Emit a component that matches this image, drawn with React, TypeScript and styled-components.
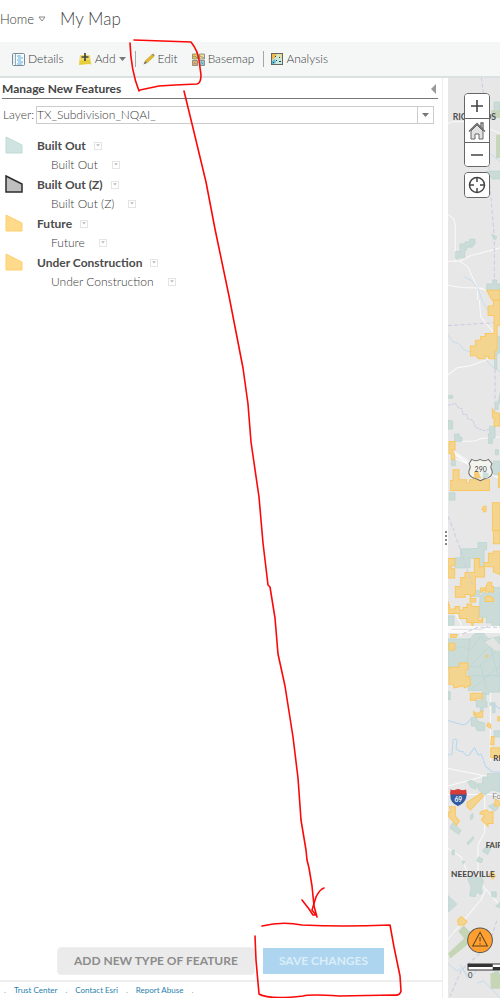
import React from "react";
import styled, { createGlobalStyle } from "styled-components";

const GlobalStyle = createGlobalStyle`
  * { box-sizing: border-box; }
  body { margin: 0; background: #fff; }
  body, button, select { font-family: Lato, "Open Sans", sans-serif; font-weight: 300; color: #3a3a3a; }
`;

const Page = styled.div`
  position: relative;
  display: flex;
  flex-direction: column;
  min-height: 100vh;
  overflow: hidden;
`;

const Header = styled.header`
  display: flex;
  align-items: center;
  gap: 14px;
  height: 42px;
  padding-bottom: 5px;
`;

const HomeButton = styled.button`
  display: flex;
  align-items: center;
  gap: 4px;
  padding: 0;
  border: 0;
  background: none;
  font-size: 13px;
  line-height: 16px;
`;

const MapTitle = styled.h1`
  margin: 0;
  font-size: 17px;
  line-height: 22px;
  font-weight: 300;
  color: #444;
`;

const Toolbar = styled.nav`
  display: flex;
  align-items: center;
  height: 36px;
  padding: 0 12px;
  background: #f5f7f7;
  border-bottom: 2px solid #dbe1e1;
`;

const Tool = styled.button<{ $after: number }>`
  display: flex;
  align-items: center;
  gap: 3px;
  padding: 0;
  margin-right: ${(p) => p.$after}px;
  border: 0;
  background: none;
  font-size: 12px;
  line-height: 16px;
  svg { flex: none; }
`;

const Divider = styled.span`
  width: 1px;
  height: 16px;
  margin-right: 7px;
  background: #a5a8a8;
`;

const Workspace = styled.div`
  flex: 1;
  display: grid;
  grid-template-columns: minmax(0, 1fr) 6px 52px;
`;

const Panel = styled.main`
  display: flex;
  flex-direction: column;
`;

const PanelHead = styled.div`
  display: flex;
  align-items: center;
  justify-content: space-between;
  height: 21px;
  padding-top: 2px;
  margin: 0 4px 0 2px;
  border-bottom: 1px solid #777;
`;

const PanelTitle = styled.h2`
  margin: 0;
  font-size: 12px;
  line-height: 16px;
  font-weight: 700;
  color: #444;
`;

const IconButton = styled.button`
  display: flex;
  padding: 0;
  border: 0;
  background: none;
`;

const LayerRow = styled.div`
  display: flex;
  align-items: center;
  gap: 2px;
  margin: 7px 8px 11px 3px;
  font-size: 12px;
  line-height: 16px;
`;

const SelectBox = styled.div`
  position: relative;
  flex: 1;
  display: flex;
`;

const LayerSelect = styled.select`
  appearance: none;
  width: 100%;
  height: 18px;
  padding: 0 20px 0 0;
  border: 1px solid #ccc;
  border-radius: 0;
  background: #fff;
  font-size: 12px;
  line-height: 16px;
`;

const SelectArrow = styled.span`
  position: absolute;
  inset: 1px 1px 1px auto;
  width: 16px;
  display: flex;
  align-items: center;
  justify-content: center;
  border-left: 1px solid #ccc;
  pointer-events: none;
`;

const FeatureList = styled.ul`
  margin: 0;
  padding: 0 5px;
  list-style: none;
`;

const Feature = styled.li`
  display: grid;
  grid-template-columns: 18px 1fr;
  column-gap: 14px;
  height: 39px;
  padding-top: 1px;
  svg { display: block; }
`;

const FeatureLine = styled.div<{ $sub?: boolean }>`
  display: flex;
  align-items: center;
  gap: ${(p) => (p.$sub ? 14 : 8)}px;
  height: 19px;
  padding-left: ${(p) => (p.$sub ? 14 : 0)}px;
  font-size: 12px;
  line-height: 16px;
  font-weight: ${(p) => (p.$sub ? 300 : 700)};
  color: ${(p) => (p.$sub ? "#3a3a3a" : "#4c4c4c")};
`;

const MenuButton = styled.button`
  display: flex;
  align-items: center;
  justify-content: center;
  width: 8px;
  height: 8px;
  padding: 0;
  border: 1px solid #e4e4e4;
  background: #fff;
`;

const Actions = styled.div`
  display: flex;
  justify-content: center;
  gap: 7px;
  margin-top: auto;
  padding-bottom: 5px;
`;

const ActionButton = styled.button<{ $primary?: boolean }>`
  height: 28px;
  padding: 0 16px;
  border: 1px solid ${(p) => (p.$primary ? "#fff" : "#efefef")};
  border-radius: ${(p) => (p.$primary ? 0 : 4)}px;
  background: ${(p) => (p.$primary ? "#aed5ef" : "#ebebeb")};
  color: ${(p) => (p.$primary ? "#daedf8" : "#8c8c8c")};
  font-size: 12px;
  line-height: 16px;
  font-weight: 700;
  white-space: nowrap;
`;

const Footer = styled.footer`
  display: flex;
  align-items: center;
  gap: 8px;
  height: 18px;
  padding-left: 4px;
  border-top: 2px solid #efefef;
  font-size: 8px;
  line-height: 12px;
  font-weight: 400;
  color: #999;
`;

const FooterLink = styled.a`
  color: #287fae;
  text-decoration: none;
`;

const Splitter = styled.div`
  display: flex;
  flex-direction: column;
  align-items: center;
  justify-content: center;
  gap: 2px;
  border-left: 1px solid #eee;
  background: #fff;
`;

const Grip = styled.i`
  width: 2px;
  height: 2px;
  background: #858585;
`;

const MapArea = styled.section`
  position: relative;
  overflow: hidden;
  background: #e7e7e7;
`;

const MapDrawing = styled.svg`
  position: absolute;
  inset: 0;
  width: 100%;
  height: 100%;
`;

const MapControls = styled.div`
  position: absolute;
  top: 15px;
  left: 16px;
  display: flex;
  flex-direction: column;
  gap: 5px;
`;

const ControlGroup = styled.div`
  display: flex;
  flex-direction: column;
  width: 26px;
  border: 1px solid #666;
  border-radius: 4px;
  background: #fff;
  overflow: hidden;
`;

const MapButton = styled.button`
  display: flex;
  align-items: center;
  justify-content: center;
  height: 24px;
  padding: 0;
  border: 0;
  background: #fff;
  & + & { border-top: 1px solid #666; }
`;

const Annotation = styled.svg`
  position: absolute;
  top: 0;
  left: 0;
  width: 500px;
  height: 998px;
  pointer-events: none;
`;

const Down = ({ w = 7, color = "#777" }: { w?: number; color?: string }) => (
  <svg width={w} height={w / 2 + 1} viewBox="0 0 8 5" aria-hidden="true">
    <path d="M0 0h8L4 4.5z" fill={color} />
  </svg>
);

const DetailsIcon = () => (
  <svg width="13" height="13" viewBox="0 0 13 13" aria-hidden="true">
    <rect x=".5" y=".5" width="12" height="12" rx="1" fill="#f5fafc" stroke="#7b8b94" />
    <path d="M3.5 1v11" stroke="#9aa8af" />
    <path d="M5 3h4M6 5h5M5 7h4M6 9h5M5 11h5" stroke="#5ab1df" />
    <path d="M1.5 3h1M1.5 6h1M1.5 9h1" stroke="#9ac8e0" />
  </svg>
);

const AddIcon = () => (
  <svg width="13" height="13" viewBox="0 0 13 13" aria-hidden="true">
    <path d="M1 2.5h10l.5 6 1 3-3-.6L0 12z" fill="#e7cd38" />
    <path d="M1 2.5h10l.3 4L1 8z" fill="#f0dc60" />
    <path d="M6 0v8M2.5 4h7" stroke="#444" strokeWidth="1.7" />
  </svg>
);

const PencilIcon = () => (
  <svg width="12" height="12" viewBox="0 0 12 12" aria-hidden="true">
    <path d="M2 8L9 1.5l2 2L4 10z" fill="#e0b92f" stroke="#c49a26" strokeWidth=".5" />
    <path d="M9 1.5l1-.9 1.7 1.7-.9.9z" fill="#8b8068" />
    <path d="M2 8l2 2-3.5 1.5z" fill="#756f5f" />
  </svg>
);

const BasemapIcon = () => (
  <svg width="13" height="13" viewBox="0 0 13 13" aria-hidden="true">
    <g stroke="#817f70" strokeWidth=".8">
      <path d="M.5 1h5v5h-5z" fill="#e8ca52" />
      <path d="M7.5 1h5v5h-5z" fill="#eddf9a" />
      <path d="M.5 7.5h5v5h-5z" fill="#dfac75" />
      <path d="M7.5 7.5h5v5h-5z" fill="#87c9df" />
    </g>
    <path d="M1 4l2-1 2 2M8 3l4 2M2 10l2 1M9 9l2 2" stroke="#777" strokeWidth=".7" fill="none" />
  </svg>
);

const AnalysisIcon = () => (
  <svg width="12" height="12" viewBox="0 0 12 12" aria-hidden="true">
    <rect x=".5" y=".5" width="11" height="11" fill="#c9e8df" stroke="#65685f" />
    <path d="M1 1h5L4 5 1 7z" fill="#efb94c" />
    <path d="M7 1h4v4L9 6z" fill="#e4df9b" />
    <path d="M1 8l3-2 1 3-2 2H1z" fill="#61b9d8" />
    <path d="M4 3h1v1H4zM8 4h1v1H8zM5 7h1v1H5zM8 8h2v1H8zM2 9h1v1H2z" fill="#344" />
  </svg>
);

const swatches = [
  { name: "Built Out", fill: "#cfe4e1", stroke: "#bddad6", weight: 1 },
  { name: "Built Out (Z)", fill: "#bfbfbf", stroke: "#2c2c2c", weight: 1.5 },
  { name: "Future", fill: "#ffda8b", stroke: "#ffd06d", weight: 1 },
  { name: "Under Construction", fill: "#ffda8b", stroke: "#ffd06d", weight: 1 },
];

const built = { fill: "#cadbd8", stroke: "#b7d4ce", strokeWidth: 2 };
const future = { fill: "#f4d58f", stroke: "#fac75f", strokeWidth: 3 };
const road = { fill: "none", stroke: "#fafafa", strokeWidth: 3 };
const water = { fill: "none", stroke: "#b5d7ef", strokeWidth: 2 };
const border = { fill: "none", stroke: "#cec9e3", strokeWidth: 3, strokeDasharray: "12 7" };

const MapPicture = () => (
  <MapDrawing viewBox="54 24 156 2757" preserveAspectRatio="xMinYMin slice" aria-label="Map of subdivisions">
    <g>
      <path d="M192 96h18v26h-18z" {...built} />
      <path d="M184 120h26v24h-26zM198 194h12v70h-12z" fill="#c7d6ba" />
      <path d="M54 160l14-5h40M175 175l35 15M54 432l18 16 4 20v105M54 573h36l30-16 90-24M90 573l24 18 28 62 68 18M54 645l40 7 66 2M143 652v38" {...road} />
      <path d="M180 250l18 14 12 10M100 618l26 14 18 24 12 34" {...water} />
      <path d="M154 22l14 110 12 220 13 150v188" {...border} />
      <path d="M170 303h40v24h-24v-7h-16zM185 492l6 3 9 5-2 7h-7zM76 544h14v-23h15v-6h14v-8h16v13l-8 11h-17v9h-6v23H84v3h-8zM170 641h18v-12h12v12h10v20h-40z" {...built} />
      <path d="M170 660h40v30h-24z" {...future} />
    </g>
    <g transform="translate(0 690)">
      <path d="M148 0l4 50 40 48M54 224l28-22 40-6 60-22M54 424l80-2 22-8 54-4M75 455l45 30M78 475l45 20 87 40" {...road} />
      <path d="M72 458l48 36 90 36" {...road} strokeWidth="7" />
      <path d="M155 0l18 30M54 104l15 20 18 6 14 18 24 8 20 12 18 4 18 22 29 20" {...water} />
      <path d="M54 76l140-9M195 150v180M54 648l18 42" {...border} />
      <path d="M54 314h9l13-5 12 15 8 1 2 16 12 2 3 12 16 5 7 21 24 9 24-3" {...border} strokeDasharray="8 3" />
      <path d="M192 108h18v50l-10 3v46h-6zM196 310l10-12 4-18v28l-6 7v12h-9zM56 285h12v9H56zM54 360l14 2v24H54zM74 401h14v9h8v13H74zM178 378h17v35h-8v16h-12v-29h5zM64 480h12v16H64zM58 577h17v22H58zM196 448h9v15h-9zM190 482h20v42h-18l-5-11z" {...built} />
      <path d="M190 0h20v75h-9v75h-7v25h-18v-7h-12v7h-18l-9-9h-16v-29h15v-17h16v-11h13v-9h27V46h-18V17h16zM187 326l8 10 14 4v37h-17v-25h-5zM57 423h18v26H65l9 13v15H64v-18h-7zM69 508h18v30h22v10h10v-10h59v32H62v-30h7zM130 505l17-6 10 15v19h-28zM160 617h8v17h-8v-7h-4zM187 607h23v83h-23zM205 518h5v44h-5z" {...future} />
      <path d="M125 477q13 8 25 0 13 8 25 0l11 13q-7 10 0 20 3 14-10 21-13 3-25 10-12-7-24-10-13-7-10-21 7-10 0-20z" fill="#f4f4ef" stroke="#6b6b6b" strokeWidth="3" />
      <path d="M132 515h14l8 20-22-2z" fill="#f5cd78" />
      <path d="M160 512l17 8-5 14-15-3z" fill="#c9dfdc" />
      <text x="152" y="516" textAnchor="middle" fontSize="21" fontWeight="400" fill="#454545">290</text>
    </g>
    <g transform="translate(0 1380)">
      <path d="M126 54h18v-18h26v22h-8v50h-28V84h-14v28H75V82h17V55h28z" {...built} />
      <path d="M54 230l15 5 24 45v38M123 318v185M54 305h156M181 480v210" {...road} />
      <path d="M150 196l10-12 12 7 12-20h26v120h-24v-14h-17v-17h-22zM54 256h18v28H54zM128 180h20v18h-20zM138 114h26v24h-26z" {...built} />
      <path d="M190 0h20v40h-20zM190 62h20v70l-20-8v-15h-28V96h13V68h15zM54 84h20v22H63v9h11v27H54zM133 84h15v25h15v30h-27v51l-15 10v-8h-16v8H76v-32h16v-27h13v-15h28zM174 155h11v13h5v16h-23v-8l-16 10v-14h15zM165 199l10-4 16 10v8h-25zM120 204h17v10h-17zM54 212l7 23h14v-7h14v11h10v-8h12v-11h14v8h21v42h7l5-10v16h-29v15l-6-15h-13v-12H88v-15H54zM62 312h20l-4 9H62z" {...future} />
      <path d="M54 286h156v21H54z" fill="#fafafa" />
      <path d="M64 296h90l20-9" fill="none" stroke="#dddddd" strokeWidth="3" />
      <path d="M54 325h65l15-16h28l12 15 36-6v166l-34 1v7l-16-3-5-10-40 2-2-65H54z" {...built} />
      <path d="M59 362l35-15 26 12 32-40 25 30-50 50M89 402l55 8 55-48M123 435h87M125 474l85-68M150 400l20 74M180 340l22 90M120 324l-8 72" stroke="#bad5cf" strokeWidth="2" fill="none" />
      <path d="M165 336l24-16 21 25v15h-14z" fill="#e4e5e2" />
      <path d="M139 510h16v-21h12v24h4v17h-12v15h-8v-16h-12zM180 516h15v30h-8v-22h-7zM123 560l15-2 6 14 20 5v23h-23l-5-14h-12zM54 483h7v24h-7zM192 600h18v19h-18z" {...built} />
      <path d="M57 338h17v20H57zM57 410h31v-13h26v19h-6v22h11l3 25-20 9v-7l-30 7-3-11H57zM121 488h35v16h-18v5h-17zM131 542l8 7 19-8v19h-21v-7h-6zM174 577l8 4v12l-12-8zM184 617h8v25h-10zM182 651h28v29h-28zM203 558h7v12h-7zM168 374h3v5h-3z" {...future} />
      <path d="M54 569l42 13 13-2 12-15M190 520l20 15M54 673l12-2 3-42q5-9 12 0l-3 23q7 12 22 11 8 15 17 10l16-22 12 22 8-3 7 18" {...water} strokeWidth="3" />
      <path d="M73 8l18 48 22 67 18 45M98 310l45-20h67" {...border} />
      <text x="190" y="692" fontSize="24" fontWeight="700" fill="#444">RI</text>
    </g>
    <g transform="translate(0 2070)">
      <path d="M54 23l113 23h43M54 76l105-29M54 101h138l18 8M164 102v112l-20 38v98l-25 22M54 263l39 25 28 68M144 358l66 76M54 535l100-120 14-32" {...road} />
      <path d="M160 0l7 18 20 15 23 1" {...water} strokeWidth="3" />
      <path d="M140 69h18V49h14V38h38v56l-24-7-22 17-17-15zM112 62l12-4 14 8v19l-14-4zM64 191l6-5 23 23-7 12-26-19zM121 164l8-6v14l-8 4zM175 136l18-8 12 12-10 12zM111 246l18-19 3 6-18 19zM66 268h7v14h-7zM157 271l15-18 10 9-9 19zM146 288l13 8-5 10-14-5zM96 300l9 2-6 8zM113 354l12-8 18 5 13-2 4 15-7 18 4 15-8 4-9-10-4 16-17-2 4-26zM184 393h15v15h-13zM54 404l27 26-27 24zM197 436l13-13v18z" {...built} />
      <path d="M111 125l42-28 7 9-39 42-10-11zM154 152l16-5 7 8 12-3v36h-15v9l-20-20 10-14-15-4zM58 138h18v28l12 14-8 14-24-27v-14h6zM196 115l14 8v12h-17zM83 477l11-10 17 15-9 10h-17zM177 341l10-9 9 13-8 9z" {...future} />
      <path d="M85 511l16-17 22 22v42l-10-8-52 43-7-15 48-45zM181 638l24-9 5 14v40h-28z" fill="#c6d5b6" />
      <path d="M54 608l26 22 18-7 24 30 18-26 34-8 36 20M90 610l24 42M140 668l20-9 50 51" {...water} />
      <path d="M200 480l-25 78-32 25-48 43-35 80" {...border} />
      <path d="M62 86q9 5 22-1 13 6 24 1l3 17q-2 24-27 34-26-11-24-34z" fill="#315b9f" stroke="#eee" strokeWidth="2" />
      <path d="M62 86q9 5 22-1 13 6 24 1l2 15H60z" fill="#d83c36" />
      <text x="85" y="125" textAnchor="middle" fontSize="20" fontWeight="700" fill="#fff">69</text>
      <text x="187" y="114" fontSize="24" fontWeight="400" fill="#8e8e91">Fo</text>
      <text x="167" y="263" fontSize="23" fontWeight="700" fill="#444">FAIR</text>
      <text x="63" y="348" fontSize="25" fontWeight="700" fill="#444">NEEDVILLE</text>
      <circle cx="150" cy="538" r="37" fill="#ff9f31" stroke="#5b554d" strokeWidth="3" />
      <path d="M150 514l22 41h-44zM150 528v14M150 547v4" fill="none" stroke="#594120" strokeWidth="3" />
      <path d="M114 609h98v18h-98z" fill="#fff" stroke="#333" strokeWidth="3" />
      <path d="M114 609h74v9h-74zM188 618h24v9h-24z" fill="#333" />
      <text x="114" y="651" fontSize="23" fontWeight="400" fill="#333">0</text>
    </g>
    <text x="68" y="151" fontSize="26" fontWeight="700" fill="#505050">RICHARDS</text>
  </MapDrawing>
);

export default function App() {
  return (
    <>
      <GlobalStyle />
      <Page>
        <Header>
          <HomeButton>
            Home
            <svg width="8" height="6" viewBox="0 0 8 6" aria-hidden="true">
              <path d="M1 1h6L4 5z" fill="#fff" stroke="#888" />
            </svg>
          </HomeButton>
          <MapTitle>My Map</MapTitle>
        </Header>
        <Toolbar>
          <Tool $after={15}><DetailsIcon />Details</Tool>
          <Tool $after={9}><AddIcon />Add <Down /></Tool>
          <Divider />
          <Tool $after={14}><PencilIcon />Edit</Tool>
          <Tool $after={9}><BasemapIcon />Basemap</Tool>
          <Divider />
          <Tool $after={0}><AnalysisIcon />Analysis</Tool>
        </Toolbar>
        <Workspace>
          <Panel>
            <PanelHead>
              <PanelTitle>Manage New Features</PanelTitle>
              <IconButton aria-label="Collapse panel">
                <svg width="7" height="10" viewBox="0 0 7 10"><path d="M5 0v10L0 5z" fill="#999" /></svg>
              </IconButton>
            </PanelHead>
            <LayerRow>
              <label htmlFor="layer">Layer:</label>
              <SelectBox>
                <LayerSelect id="layer"><option>TX_Subdivision_NQAI_</option></LayerSelect>
                <SelectArrow><Down /></SelectArrow>
              </SelectBox>
            </LayerRow>
            <FeatureList>
              {swatches.map((s) => (
                <Feature key={s.name}>
                  <svg width="18" height="18" viewBox="0 0 18 18" aria-hidden="true">
                    <path d="M1 1l16 8v8H1z" fill={s.fill} stroke={s.stroke} strokeWidth={s.weight} />
                  </svg>
                  <div>
                    <FeatureLine>
                      {s.name}
                      <MenuButton aria-label={`${s.name} group options`}><Down w={4} color="#bbb" /></MenuButton>
                    </FeatureLine>
                    <FeatureLine $sub>
                      {s.name}
                      <MenuButton aria-label={`${s.name} options`}><Down w={4} color="#bbb" /></MenuButton>
                    </FeatureLine>
                  </div>
                </Feature>
              ))}
            </FeatureList>
            <Actions>
              <ActionButton>ADD NEW TYPE OF FEATURE</ActionButton>
              <ActionButton $primary>SAVE CHANGES</ActionButton>
            </Actions>
            <Footer>
              <span>.</span><FooterLink href="#trust">Trust Center</FooterLink>
              <span>.</span><FooterLink href="#contact">Contact Esri</FooterLink>
              <span>.</span><FooterLink href="#report">Report Abuse</FooterLink>
              <span>.</span>
            </Footer>
          </Panel>
          <Splitter><Grip /><Grip /><Grip /><Grip /></Splitter>
          <MapArea>
            <MapPicture />
            <MapControls>
              <ControlGroup>
                <MapButton aria-label="Zoom in">
                  <svg width="12" height="12" viewBox="0 0 12 12"><path d="M6 0v12M0 6h12" stroke="#444" strokeWidth="1.6" /></svg>
                </MapButton>
                <MapButton aria-label="Default extent">
                  <svg width="18" height="18" viewBox="0 0 18 18">
                    <path d="M3 9v8h4v-5h4v5h4V9L9 3z" fill="#e2e2e2" stroke="#666" />
                    <path d="M1 9.5L9 1.5l8 8M13 5V1h2v6" fill="none" stroke="#666" strokeWidth="1.3" />
                  </svg>
                </MapButton>
                <MapButton aria-label="Zoom out">
                  <svg width="12" height="12" viewBox="0 0 12 12"><path d="M0 6h12" stroke="#444" strokeWidth="1.6" /></svg>
                </MapButton>
              </ControlGroup>
              <ControlGroup>
                <MapButton aria-label="My location">
                  <svg width="18" height="18" viewBox="0 0 18 18">
                    <circle cx="9" cy="9" r="7.5" fill="none" stroke="#444" strokeWidth="1.5" />
                    <path d="M9 1v5M9 12v5M1 9h5M12 9h5" stroke="#444" strokeWidth="1.5" />
                  </svg>
                </MapButton>
              </ControlGroup>
            </MapControls>
          </MapArea>
        </Workspace>
        <Annotation viewBox="0 0 500 998" aria-hidden="true">
          <g fill="none" stroke="#fb0909" strokeWidth="1.6" strokeLinecap="round" strokeLinejoin="round">
            <path d="M134 40l57 2q7 9 8 18l2 15q0 8-4 9l-22 1-16 1-19 4-1 1q-8-20-9-48" />
            <path d="M184 91l9 37 13 54 9 47 14 67 14 72 5 36 3 38 8 55 4 46 5 42 2 2 5 31 3 36 7 32 8 51 5 41 3 42 5 30 1 10 2 8 3 18 2 20 3 11" />
            <path d="M302 900l7 9 4 6 3 0-4-5 4-13q4-8 8-9" />
            <path d="M262 926q20-5 40-1 40 2 88 0l4 22 6 29 1 15q-1 5-7 4l-55 1q-29-2-36 0-34 4-44-2l-3-34-1-24" />
          </g>
        </Annotation>
      </Page>
    </>
  );
}
